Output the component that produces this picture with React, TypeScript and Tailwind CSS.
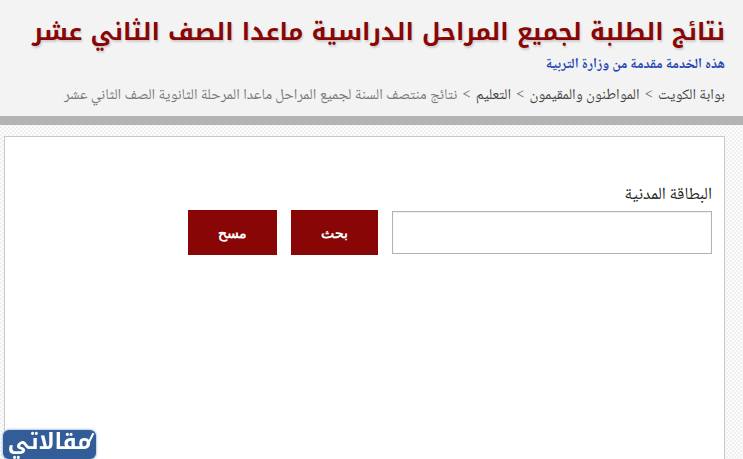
import React from "react";

const crumbs = ["بوابة الكويت", "المواطنون والمقيمون", "التعليم"];

const ActionButton: React.FC<{
  label: string;
  type: "submit" | "reset";
}> = ({ label, type }) => {
  return (
    <button
      type={type}
      className="h-[45px] cursor-pointer bg-[#880606] px-[30px] font-['Noto_Sans',sans-serif] text-[14px] font-bold text-white hover:bg-[#6d0505]"
    >
      {label}
    </button>
  );
};

const PageHeader: React.FC = () => {
  return (
    <header className="border-b-[9px] border-[#b3b3b3] bg-[#f3f3f3] pt-3 pr-[18px] pb-2 pl-3">
      <h1 className="font-['Noto_Kufi_Arabic','Noto_Sans',sans-serif] text-[24px] leading-[40px] font-bold whitespace-nowrap text-[#880606] [text-shadow:1px_2px_2px_#cccccc]">
        نتائج الطلبة لجميع المراحل الدراسية ماعدا الصف الثاني عشر
      </h1>
      <p className="text-[14px] leading-[26px] font-bold text-[#2446b5]">
        هذه الخدمة مقدمة من وزارة التربية
      </p>
      <nav className="pt-1.5 text-[15px] leading-[24px] whitespace-nowrap text-[#777777]">
        {crumbs.map((crumb) => (
          <span key={crumb}>
            <a href="#" className="text-[#444444]">
              {crumb}
            </a>
            <span className="mx-[5px]">{">"}</span>
          </span>
        ))}
        <span>
          نتائج منتصف السنة لجميع المراحل ماعدا المرحلة الثانوية الصف الثاني عشر
        </span>
      </nav>
    </header>
  );
};

const SearchForm: React.FC = () => {
  return (
    <form onSubmit={(e) => e.preventDefault()}>
      <label
        htmlFor="civil-id"
        className="block text-[17px] leading-[28px] text-[#222222]"
      >
        البطاقة المدنية
      </label>
      <div className="flex flex-wrap items-center gap-[14px]">
        <input
          id="civil-id"
          type="text"
          className="h-[43px] w-[320px] border border-[#b3b3b3] bg-white px-3 shadow-[inset_0_1px_2px_#eeeeee] outline-none"
        />
        <ActionButton label="بحث" type="submit" />
        <ActionButton label="مسح" type="reset" />
      </div>
    </form>
  );
};

const SiteBadge: React.FC = () => {
  return (
    <div className="fixed bottom-0 left-[3px] flex h-[29px] w-[93px] items-start justify-center rounded-md bg-[#335d98] font-['Noto_Kufi_Arabic','Noto_Sans',sans-serif] text-[22px] leading-[25px] font-bold text-white shadow-[0_0_2px_1px_#b9cbe6]">
      مقالاتي
      <svg
        viewBox="0 0 8 14"
        className="absolute top-[3px] right-[2px] h-[14px] w-2"
        fill="none"
        stroke="#ffffff"
        strokeWidth="2"
        strokeLinecap="round"
      >
        <path d="M7 1 L3 9" />
      </svg>
    </div>
  );
};

export default function App() {
  return (
    <div
      dir="rtl"
      className="flex min-h-screen flex-col bg-[#fcfcfc] bg-[conic-gradient(#f0f0f0_25%,transparent_0_50%,#f0f0f0_0_75%,transparent_0)] bg-size-[4px_4px] font-['Noto_Naskh_Arabic','Noto_Sans',sans-serif]"
    >
      <PageHeader />
      <main className="mt-[11px] mr-[18px] ml-1 flex-1 border border-b-0 border-[#c8c8c8] bg-white px-3 pt-[45px]">
        <SearchForm />
      </main>
      <SiteBadge />
    </div>
  );
}
